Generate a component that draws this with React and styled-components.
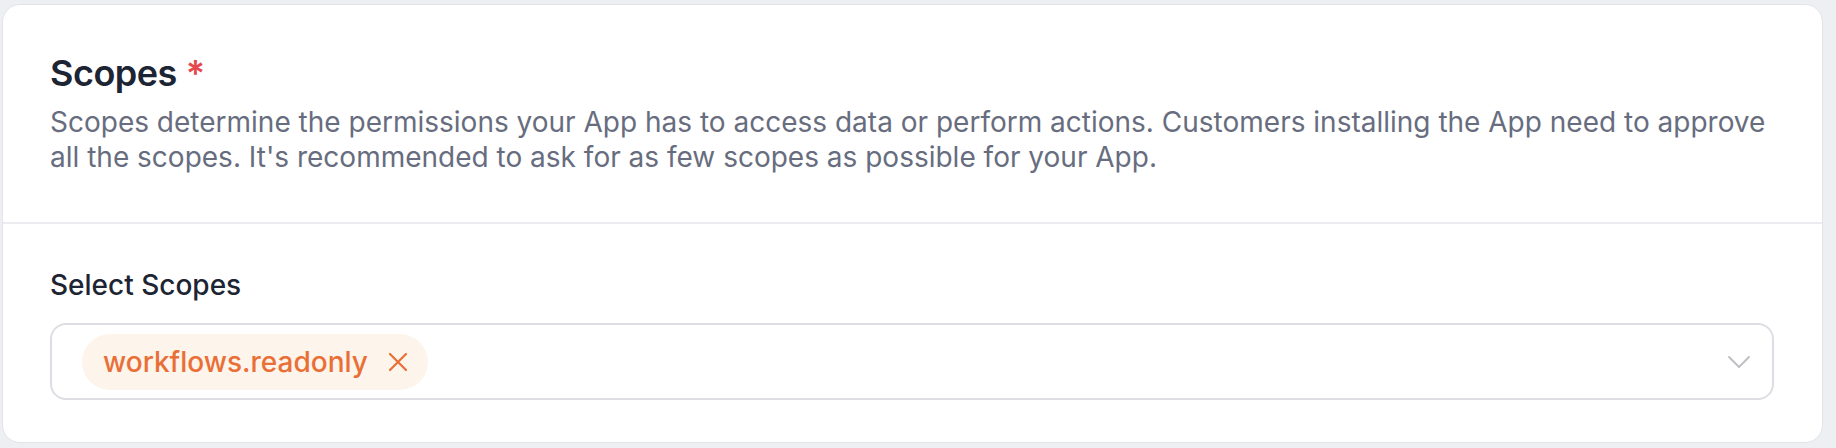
import React from 'react';
import styled, { createGlobalStyle } from 'styled-components';

const Global = createGlobalStyle`
  html, body {
    margin: 0;
    padding: 0;
    background: #eeeff2;
    font-family: Inter, "Noto Sans", "Liberation Sans", sans-serif;
  }
`;

const Page = styled.div`
  padding: 4px 13px 5px 2px;
  height: 448px;
  box-sizing: border-box;
`;

const Card = styled.section`
  background: #ffffff;
  border: 1px solid #e3e4e8;
  border-radius: 18px;
  height: 100%;
  box-sizing: border-box;
  display: flex;
  flex-direction: column;
`;

const Header = styled.div`
  padding: 46px 48px 47px 47px;
  border-bottom: 2px solid #ececf0;
`;

const Title = styled.h2`
  margin: 0;
  font-size: 36px;
  line-height: 45px;
  font-weight: 600;
  color: #1d2433;
  letter-spacing: -0.5px;
`;

const Required = styled.span`
  color: #e5484d;
  margin-left: 9px;
`;

const Description = styled.p`
  margin: 9px 0 0;
  font-size: 28px;
  line-height: 35px;
  color: #676d7e;
  max-width: 1730px;
`;

const Body = styled.div`
  padding: 44px 48px 0 47px;
`;

const Label = styled.div`
  font-size: 28px;
  line-height: 35px;
  font-weight: 500;
  color: #1d2433;
  margin-bottom: 20px;
`;

const Select = styled.div`
  height: 77px;
  box-sizing: border-box;
  border: 2px solid #dddee3;
  border-radius: 16px;
  display: flex;
  align-items: center;
  padding: 0 22px 0 30px;
`;

const Chips = styled.div`
  flex: 1;
  display: flex;
  gap: 12px;
`;

const Chip = styled.span`
  display: inline-flex;
  align-items: center;
  gap: 20px;
  height: 56px;
  padding: 0 20px 0 21px;
  border-radius: 28px;
  background: #fdf4eb;
  color: #e96f37;
  font-size: 28px;
  font-weight: 500;
`;

const Remove = styled.span`
  display: inline-flex;
  width: 20px;
  height: 20px;
`;

const Chevron = styled.span`
  display: inline-flex;
  width: 22px;
  height: 12px;
`;

export default function App() {
  return (
    <>
      <Global />
      <Page>
        <Card>
          <Header>
            <Title>
              Scopes<Required>*</Required>
            </Title>
            <Description>
              Scopes determine the permissions your App has to access data or perform actions. Customers installing the App need to approve all the scopes. It's recommended to ask for as few scopes as possible for your App.
            </Description>
          </Header>
          <Body>
            <Label>Select Scopes</Label>
            <Select>
              <Chips>
                <Chip>
                  workflows.readonly
                  <Remove>
                    <svg width="20" height="20" viewBox="0 0 20 20" fill="none" stroke="currentColor" strokeWidth="2.2" strokeLinecap="round">
                      <path d="M2 2 L18 18 M18 2 L2 18" />
                    </svg>
                  </Remove>
                </Chip>
              </Chips>
              <Chevron>
                <svg width="22" height="12" viewBox="0 0 22 12" fill="none" stroke="#bdbec4" strokeWidth="1.8" strokeLinecap="round" strokeLinejoin="round">
                  <path d="M1 1 L11 11 L21 1" />
                </svg>
              </Chevron>
            </Select>
          </Body>
        </Card>
      </Page>
    </>
  );
}
